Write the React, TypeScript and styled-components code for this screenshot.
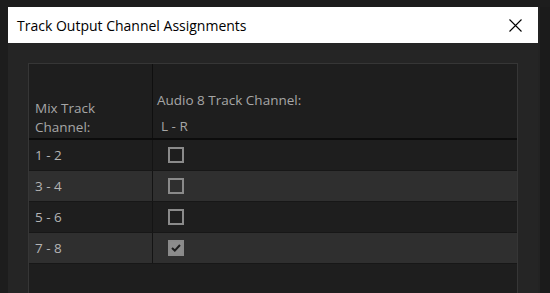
import React from 'react';
import styled, { createGlobalStyle } from 'styled-components';

const GlobalStyle = createGlobalStyle`
	html, body {
		margin: 0;
		padding: 0;
		background: #1c1c1c;
		overflow: hidden;
	}
`;

const Page = styled.div`
	display: flex;
	width: 550px;
	height: 293px;
	padding: 7px 0 0 8px;
	box-sizing: border-box;
	background: #1d1d1d;
`;

const Dialog = styled.div`
	width: 530px;
	flex: none;
	display: flex;
	flex-direction: column;
	background: #252525;
`;

const TitleBar = styled.div`
	height: 36px;
	display: flex;
	align-items: center;
	justify-content: space-between;
	padding: 0 12px 0 9px;
	background: #ffffff;
	font-family: 'Open Sans', 'Noto Sans', sans-serif;
	font-size: 14px;
	color: #000;
`;

const CloseButton = styled.button`
	width: 22px;
	height: 22px;
	padding: 0;
	border: 0;
	background: transparent;
	display: flex;
	align-items: center;
	justify-content: center;
`;

const Body = styled.div`
	flex: 1;
	padding: 20px 20px 0;
`;

const Table = styled.div`
	height: 100%;
	border: 1px solid #363636;
	border-bottom: 0;
	background: #1e1e1e;
	font-family: 'Open Sans', 'Noto Sans', sans-serif;
	font-size: 13.5px;
	color: #b4b4b4;
`;

const HeaderRow = styled.div`
	display: grid;
	grid-template-columns: 123px 1fr;
	height: 74px;
	border-bottom: 2px solid #0c0c0c;
`;

const HeaderCell = styled.div<{ $pad: number; $lines: number; $gap: number }>`
	display: flex;
	flex-direction: column;
	justify-content: flex-end;
	gap: ${p => p.$gap}px;
	padding: 0 0 1px ${p => p.$pad}px;
	line-height: ${p => p.$lines}px;
	color: #a6a6a6;
	& + & {
		border-left: 1px solid #0f0f0f;
	}
`;

const SubLabel = styled.span`
	padding-left: 4px;
`;

const Row = styled.div<{ $alt: boolean }>`
	display: grid;
	grid-template-columns: 123px 1fr;
	height: 30px;
	border-bottom: 1px solid #171717;
	background: ${p => (p.$alt ? '#2f2f2f' : '#1e1e1e')};
`;

const Cell = styled.div`
	display: flex;
	align-items: center;
	padding-left: 6px;
	& + & {
		border-left: 1px solid #141414;
		padding-left: 15px;
	}
`;

const Box = styled.span<{ $checked: boolean }>`
	width: 16px;
	height: 16px;
	box-sizing: border-box;
	border: 2px solid #8a8a8a;
	background: ${p => (p.$checked ? '#8c8c8c' : 'transparent')};
	display: flex;
	align-items: center;
	justify-content: center;
`;

const Strip = styled.div`
	flex: 1;
	border-left: 2px solid #232323;
	background: #1b1b1b;
`;

const rows = [
	{ label: '1 - 2', checked: false },
	{ label: '3 - 4', checked: false },
	{ label: '5 - 6', checked: false },
	{ label: '7 - 8', checked: true },
];

export default function App() {
	return (
		<>
			<GlobalStyle />
			<Page>
				<Dialog>
					<TitleBar>
						<span>Track Output Channel Assignments</span>
						<CloseButton aria-label="Close">
							<svg width="13" height="13" viewBox="0 0 13 13">
								<path d="M0.5 0.5 L12.5 12.5 M12.5 0.5 L0.5 12.5" stroke="#000" strokeWidth="1.1" />
							</svg>
						</CloseButton>
					</TitleBar>
					<Body>
						<Table>
							<HeaderRow>
								<HeaderCell $pad={6} $lines={19} $gap={0}>
									<span>Mix Track</span>
									<span>Channel:</span>
								</HeaderCell>
								<HeaderCell $pad={4} $lines={22} $gap={4}>
									<span>Audio 8 Track Channel:</span>
									<SubLabel>L - R</SubLabel>
								</HeaderCell>
							</HeaderRow>
							{rows.map((r, i) => (
								<Row key={r.label} $alt={i % 2 === 1}>
									<Cell>{r.label}</Cell>
									<Cell>
										<Box $checked={r.checked}>
											{r.checked && (
												<svg width="10" height="8" viewBox="0 0 10 8">
													<path d="M1 4 L3.8 6.6 L9 1" stroke="#1e1e1e" strokeWidth="2" fill="none" />
												</svg>
											)}
										</Box>
									</Cell>
								</Row>
							))}
						</Table>
					</Body>
				</Dialog>
				<Strip />
			</Page>
		</>
	);
}
